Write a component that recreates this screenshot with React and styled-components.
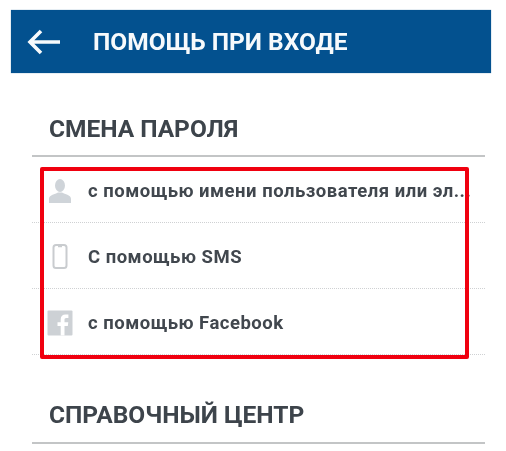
import React from "react";
import styled, { createGlobalStyle } from "styled-components";

const Global = createGlobalStyle`
  html, body { margin: 0; padding: 0; background: #fff; }
  body { width: 506px; height: 451px; overflow: hidden; font-family: Roboto, "Liberation Sans", sans-serif; }
`;

const Page = styled.div`
  position: relative;
  width: 506px;
  height: 451px;
  padding-top: 10px;
  box-sizing: border-box;
  overflow: hidden;
`;

const Header = styled.header`
  display: flex;
  align-items: center;
  margin: 0 15px 0 11px;
  height: 63px;
  background: #03518f;
  color: #f7fafc;
  box-shadow: 0 0 1px rgba(3, 81, 143, 0.6);
`;

const BackIcon = styled.svg`
  width: 34px;
  height: 26px;
  margin-left: 16px;
  flex: none;
`;

const Title = styled.h1`
  margin: 0 0 0 32px;
  font-size: 24.5px;
  line-height: 28px;
  font-weight: 700;
  white-space: nowrap;
  filter: blur(0.4px);
`;

const Section = styled.section`
  margin: 0 21px 0 32px;
`;

const SectionTitle = styled.h2`
  height: ${(p) => p.$height}px;
  margin: 0;
  padding: ${(p) => p.$top}px 0 0 17px;
  box-sizing: border-box;
  border-bottom: 2px solid #c3c5c6;
  color: #3d444b;
  font-size: 24.5px;
  line-height: 26px;
  font-weight: 700;
  white-space: nowrap;
  filter: blur(0.4px);
`;

const Row = styled.div`
  display: flex;
  align-items: center;
  height: 66px;
  padding-top: 2px;
  border-bottom: 1px dotted #cfd1d3;
  box-sizing: border-box;
`;

const IconSlot = styled.div`
  display: flex;
  justify-content: center;
  width: 56px;
  flex: none;
  filter: blur(0.4px);
`;

const RowText = styled.span`
  font-size: 18.5px;
  line-height: 22px;
  font-weight: 700;
  letter-spacing: 0.5px;
  color: #41474e;
  white-space: nowrap;
  filter: blur(0.35px);
`;

const Highlight = styled.div`
  position: absolute;
  left: 40px;
  top: 167px;
  width: 429px;
  height: 192px;
  box-sizing: border-box;
  border: 4px solid #f0000f;
  border-radius: 2px;
  pointer-events: none;
`;

const UserIcon = () => (
  <svg width="24" height="26" viewBox="0 0 24 26">
    <ellipse cx="12" cy="7.5" rx="5" ry="6.5" fill="#cfd4d9" />
    <path d="M1 25v-4c0-3 3-4 7-5.500l2-1h4l2 1c4 1.500 7 2.500 7 5.500v4z" fill="#cfd4d9" />
  </svg>
);

const PhoneIcon = () => (
  <svg width="16" height="25" viewBox="0 0 16 25">
    <rect x="1.500" y="1" width="13" height="23" rx="2.500" fill="none" stroke="#c9cccf" strokeWidth="2" />
    <path d="M6 2.500h4" stroke="#c9cccf" strokeWidth="1.500" />
  </svg>
);

const FacebookIcon = () => (
  <svg width="26" height="26" viewBox="0 0 26 26">
    <rect x="0.500" y="0.500" width="25" height="25" rx="1" fill="#cdd1d5" />
    <path d="M17.500 25.500v-9.500h3.300l.5-3.800h-3.800v-2.400c0-1.100.4-1.800 1.900-1.800h2v-3.400c-.4-.1-1.600-.2-2.900-.2-2.900 0-4.800 1.700-4.800 4.900v2.900h-3.200v3.800h3.200v9.500z" fill="#fff" />
  </svg>
);

const rows = [
  { icon: <UserIcon />, text: "с помощью имени пользователя или эл..." },
  { icon: <PhoneIcon />, text: "С помощью SMS" },
  { icon: <FacebookIcon />, text: "с помощью Facebook" },
];

export default function App() {
  return (
    <Page>
      <Global />
      <Header>
        <BackIcon viewBox="0 0 34 26" fill="none" stroke="#f7fafc" strokeWidth="3.600">
          <path d="M3 13h30M14 2 3 13l11 11" />
        </BackIcon>
        <Title>ПОМОЩЬ ПРИ ВХОДЕ</Title>
      </Header>
      <Section>
        <SectionTitle $height={84} $top={43}>СМЕНА ПАРОЛЯ</SectionTitle>
        {rows.map((r) => (
          <Row key={r.text}>
            <IconSlot>{r.icon}</IconSlot>
            <RowText>{r.text}</RowText>
          </Row>
        ))}
        <SectionTitle $height={89} $top={47}>СПРАВОЧНЫЙ ЦЕНТР</SectionTitle>
      </Section>
      <Highlight />
    </Page>
  );
}
